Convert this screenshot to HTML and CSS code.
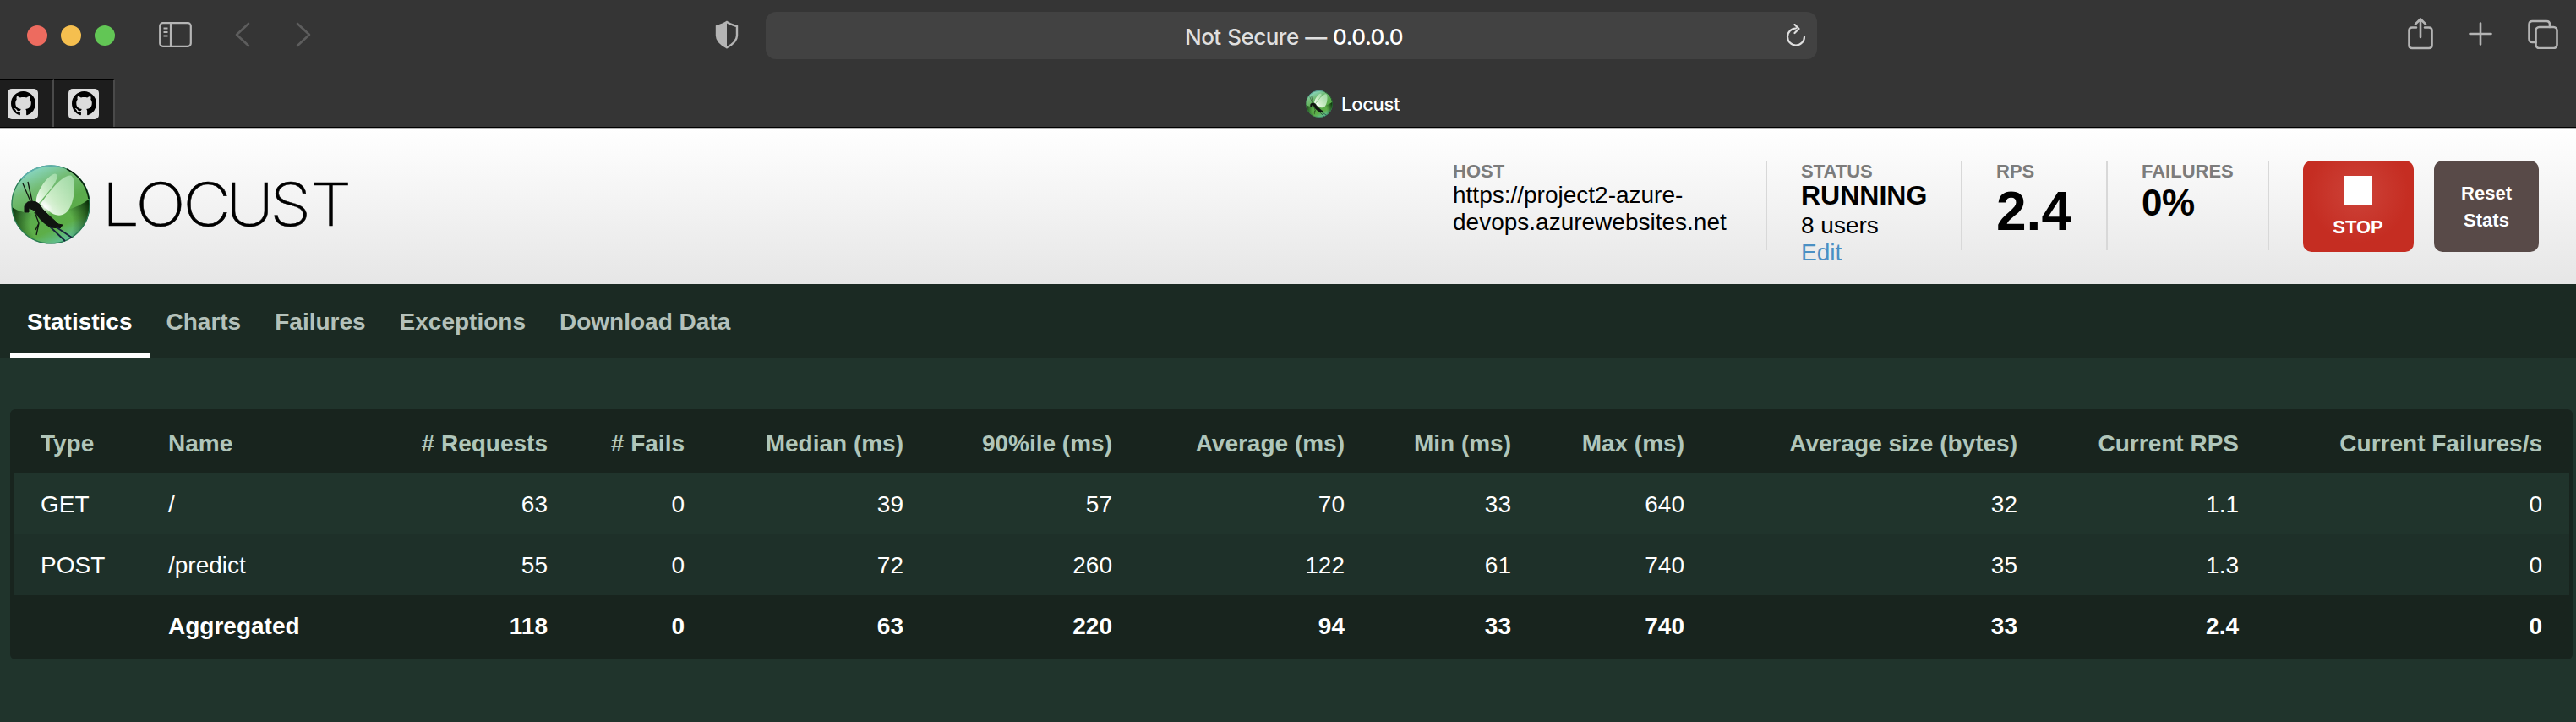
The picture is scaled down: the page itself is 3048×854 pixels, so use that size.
FILE: index.html
```html
<!DOCTYPE html>
<html lang="en">
<head>
<meta charset="utf-8">
<title>Locust</title>
<link rel="stylesheet" href="styles.css">
</head>
<body>
<svg class="defs" width="0" height="0">
  <defs>
    <linearGradient id="ball" x1="0.2" y1="0" x2="0.65" y2="1">
      <stop offset="0" stop-color="#8fdedb"/><stop offset="0.28" stop-color="#74bd76"/><stop offset="0.55" stop-color="#5aab4c"/><stop offset="0.8" stop-color="#5dae48"/><stop offset="1" stop-color="#62c3a0"/>
    </linearGradient>
    <radialGradient id="shade" gradientUnits="userSpaceOnUse" cx="48" cy="70" r="50">
      <stop offset="0.5" stop-color="#0b3a08" stop-opacity="0"/><stop offset="1" stop-color="#062a06" stop-opacity="0.95"/>
    </radialGradient>
    <linearGradient id="wing" x1="0" y1="1" x2="1" y2="0">
      <stop offset="0" stop-color="#fff"/><stop offset="0.4" stop-color="#d7f3d3" stop-opacity="0.9"/><stop offset="1" stop-color="#a9e0b0" stop-opacity="0.8"/>
    </linearGradient>
    <radialGradient id="glow"><stop offset="0" stop-color="#fff"/><stop offset="1" stop-color="#fff" stop-opacity="0"/></radialGradient>
    <symbol id="locust" viewBox="0 0 94 94">
      <circle cx="47" cy="47" r="46.5" fill="url(#ball)"/>
      <path d="M1 50C18 62 65 62 93 40A46.500 46.500 0 0 1 47 93.500A46.500 46.500 0 0 1 1 50Z" fill="url(#shade)"/>
      <circle cx="47" cy="47" r="46" fill="none" stroke="#2a7a55" stroke-width="1.200"/>
      <path d="M12 17A46 46 0 0 1 60 3" fill="none" stroke="#5fb0ad" stroke-width="1.500"/>
      <path d="M66 5A46 46 0 0 1 92 40" fill="none" stroke="#07200c" stroke-width="1.500"/>
      <path d="M30 45C28 34 43 12 52 10.500C58 11 53 22 45 31C39 38 35 43 32 46Z" fill="url(#wing)"/>
      <path d="M35 46C44 33 61 11 71 12.500C77 16 76 38 70 50C65 60 57 62 48 57Z" fill="url(#wing)"/>
      <ellipse cx="40" cy="50" rx="11" ry="7" transform="rotate(40 40 50)" fill="url(#glow)"/>
      <path d="M16 56L16 49Q18 43 24 43Q31 43 34 47C37 54 48 62 56 70L61 71L58 75L47 74C36 68 30 59 28 54L21 51L21 56Z" fill="#101410" stroke="#101410"/>
      <path d="M23 43L14 22M25 43L20 20M28 56L33 69L30 83M33 69L29 77" fill="none" stroke="#101810" stroke-width="1.300"/>
      <path d="M46 73L64 90M54 74L72 86" fill="none" stroke="#16243b" stroke-width="1.800"/>
    </symbol>
    <symbol id="github" viewBox="0 0 16 16">
      <path d="M8 0C3.580 0 0 3.580 0 8c0 3.540 2.290 6.530 5.470 7.590.4.070.55-.17.55-.38 0-.19-.01-.82-.01-1.490-2.010.37-2.530-.49-2.690-.94-.09-.23-.48-.94-.82-1.130-.28-.15-.68-.52-.01-.53.63-.01 1.080.58 1.230.82.72 1.210 1.870.87 2.330.66.07-.52.28-.87.51-1.070-1.780-.2-3.640-.89-3.640-3.950 0-.87.31-1.590.82-2.150-.08-.2-.36-1.020.08-2.120 0 0 .67-.21 2.200.82.64-.18 1.320-.27 2-.27s1.360.09 2 .27c1.530-1.040 2.200-.82 2.200-.82.44 1.100.16 1.920.08 2.120.51.56.82 1.270.82 2.150 0 3.070-1.870 3.750-3.650 3.950.29.25.54.73.54 1.480 0 1.070-.01 1.930-.01 2.200 0 .21.15.46.55.38A8.010 8.010 0 0 0 16 8c0-4.420-3.580-8-8-8z"/>
    </symbol>
  </defs>
</svg>

<div class="browser">
  <div class="toolbar">
    <div class="tools-left">
      <div class="lights"><i class="light red"></i><i class="light yellow"></i><i class="light green"></i></div>
      <svg class="sidebar-icon" width="40" height="30" viewBox="0 0 40 30"><rect x="1.200" y="1.200" width="36.600" height="27.600" rx="3.500"/><path d="M14 1V29M5.500 7.500H10.500M5.500 12H10.500M5.500 16.500H10.500"/></svg>
      <svg class="nav-icon back" width="18" height="30" viewBox="0 0 18 30"><path d="M16 2L2 15L16 28"/></svg>
      <svg class="nav-icon forward" width="18" height="30" viewBox="0 0 18 30"><path d="M2 2L16 15L2 28"/></svg>
    </div>
    <svg class="shield" width="28" height="34" viewBox="0 0 28 34"><path class="edge" d="M14 2C17.500 4.500 21 5.500 26 7.200V18C26 24 21 28.500 14 32.300C7 28.500 2 24 2 18V7.200C7 5.500 10.500 4.500 14 2Z"/><path class="half" d="M14 2V32.300C7 28.500 2 24 2 18V7.200C7 5.500 10.500 4.500 14 2Z"/></svg>
    <div class="address">
      <span class="url">Not Secure — <b>0.0.0.0</b></span>
      <svg class="reload" width="24" height="28" viewBox="0 0 24 28"><path d="M12 5.500A10 10 0 1 0 22 15.500M10.500 1L15.500 6L10.500 11"/></svg>
    </div>
    <div class="tools-right">
      <svg width="30" height="40" viewBox="0 0 30 40"><path d="M10 12.500H5Q1.500 12.500 1.500 16V33.500Q1.500 37 5 37H25Q28.500 37 28.500 33.500V16Q28.500 12.500 25 12.500H20M15 24V2.500M9 8.500L15 2.500L21 8.500"/></svg>
      <svg width="28" height="28" viewBox="0 0 28 28"><path d="M14 1.500V26.500M1.500 14H26.500"/></svg>
      <svg width="36" height="36" viewBox="0 0 36 36"><rect x="9.500" y="10" width="25" height="25" rx="4"/><path d="M9.500 28H5.500Q1.500 28 1.500 24V7Q1.500 3 5.500 3H22Q26 3 26 7V10"/></svg>
    </div>
  </div>
  <div class="tabs">
    <div class="pin first"><span><svg width="29" height="29"><use href="#github"/></svg></span></div>
    <div class="pin"><span><svg width="29" height="29"><use href="#github"/></svg></span></div>
    <div class="active-tab"><svg width="32" height="32"><use href="#locust"/></svg><span>Locust</span></div>
  </div>
</div>

<header class="top">
  <div class="logo">
    <svg width="94" height="94"><use href="#locust"/></svg>
    <svg class="wordmark" width="300" height="90" viewBox="0 0 300 90"><text transform="scale(1.12 1)" y="76" x="-4.700 30.700 80.700 126 172.500 215.200">LOCUST</text></svg>
  </div>
  <div class="boxes">
    <div class="box host"><div class="label">HOST</div><div>https://project2-azure-<br>devops.azurewebsites.net</div></div>
    <div class="box status"><div class="label">STATUS</div><div class="running">RUNNING</div><div>8 users</div><a href="#">Edit</a></div>
    <div class="box rps"><div class="label">RPS</div><div class="big">2.4</div></div>
    <div class="box fail"><div class="label">FAILURES</div><div class="mid">0%</div></div>
    <button class="btn stop"><i></i>STOP</button>
    <button class="btn reset">Reset<br>Stats</button>
  </div>
</header>

<nav class="menu"><a class="on">Statistics</a><a>Charts</a><a>Failures</a><a>Exceptions</a><a>Download Data</a></nav>

<main>
<table class="stats">
  <colgroup><col class="c1"><col class="c2"><col class="c3"><col class="c4"><col class="c5"><col class="c6"><col class="c7"><col class="c8"><col class="c9"><col class="c10"><col class="c11"><col class="c12"></colgroup>
  <thead><tr><th>Type</th><th>Name</th><th># Requests</th><th># Fails</th><th>Median (ms)</th><th>90%ile (ms)</th><th>Average (ms)</th><th>Min (ms)</th><th>Max (ms)</th><th>Average size (bytes)</th><th>Current RPS</th><th>Current Failures/s</th></tr></thead>
  <tbody>
    <tr><td>GET</td><td>/</td><td>63</td><td>0</td><td>39</td><td>57</td><td>70</td><td>33</td><td>640</td><td>32</td><td>1.1</td><td>0</td></tr>
    <tr class="alt"><td>POST</td><td>/predict</td><td>55</td><td>0</td><td>72</td><td>260</td><td>122</td><td>61</td><td>740</td><td>35</td><td>1.3</td><td>0</td></tr>
    <tr class="total"><td></td><td>Aggregated</td><td>118</td><td>0</td><td>63</td><td>220</td><td>94</td><td>33</td><td>740</td><td>33</td><td>2.4</td><td>0</td></tr>
  </tbody>
</table>
</main>
</body>
</html>
```
FILE: styles.css
```css
* { box-sizing: border-box; }
body { margin: 0; height: 854px; overflow: hidden; background: #20342c; font: 28px/32px "Liberation Sans", Arial, sans-serif; color: #000; }
svg { display: block; }
.defs { position: absolute; }

.browser { height: 152px; background: #353535; border-bottom: 1px solid #b5b5b5; box-shadow: inset 0 -1px #000; font-family: Inter, sans-serif; }
.toolbar { height: 94px; display: flex; align-items: flex-start; }
.tools-left { width: 846px; display: flex; padding-left: 32px; }
.lights { display: flex; gap: 16px; padding-top: 30px; }
.light { width: 24px; height: 24px; border-radius: 50%; }
.red { background: #ed6b5f; }
.yellow { background: #f5bf4f; }
.green { background: #62c655; }
.sidebar-icon { margin: 26px 0 0 52px; fill: none; stroke: #b5b5b5; stroke-width: 2.2; }
.nav-icon { margin-top: 26px; fill: none; stroke: #5d5d5d; stroke-width: 2.6; stroke-linecap: round; stroke-linejoin: round; }
.back { margin-left: 50px; }
.forward { margin-left: 54px; }
.shield { margin-top: 24px; }
.shield .edge { fill: none; stroke: #b4b4b4; stroke-width: 2.4; }
.shield .half { fill: #b4b4b4; }
.address { width: 1244px; height: 56px; margin: 14px 0 0 32px; border-radius: 12px; background: #424242; display: flex; align-items: center; padding: 0 13px 0 496px; justify-content: space-between; }
.url { padding-top: 3px; font-size: 26px; font-weight: 450; letter-spacing: -0.5px; word-spacing: 1px; color: #dfdfdf; white-space: nowrap; }
.url b { font-weight: 500; color: #fff; }
.reload { fill: none; stroke: #dedede; stroke-width: 2.2; stroke-linecap: round; stroke-linejoin: round; }
.tools-right { margin-left: 699px; padding-top: 20px; display: flex; align-items: center; gap: 42px; }
.tools-right svg { fill: none; stroke: #b4b4b4; stroke-width: 2.6; stroke-linecap: round; stroke-linejoin: round; flex: none; }

.tabs { height: 57px; display: flex; }
.pin { width: 72px; height: 56px; background: #1d1d1d; border-top: 1px solid #000; border-right: 2px solid #4a4a4a; display: flex; align-items: center; padding-left: 17px; }
.pin.first { width: 64px; padding-left: 9px; }
.pin span { width: 36px; height: 36px; border-radius: 5px; background: #dcdcdc; display: grid; place-items: center; }
.active-tab { flex: 1; display: flex; align-items: center; gap: 10px; padding-left: 1409px; color: #fff; font-size: 22px; font-weight: 500; letter-spacing: -0.3px; }

.top { height: 184px; background: linear-gradient(#fff, #e6e6e6); display: flex; justify-content: space-between; }
.logo { display: flex; padding: 43px 0 0 13px; }
.wordmark { margin: -4px 0 0 19px; overflow: visible; }
.wordmark text { font: 200 70px Inter, sans-serif; fill: #000; stroke: #000; stroke-width: 0.5; }
.boxes { display: flex; padding: 38px 44px 0 0; }
.box { height: 106px; border-right: 2px solid #d8d8d8; margin-right: 40px; white-space: nowrap; }
.label { font-size: 22px; line-height: 26px; font-weight: bold; color: #7c7c7c; height: 25px; }
.host { width: 372px; }
.status { width: 191px; }
.rps { width: 132px; }
.fail { width: 151px; }
.running { font-size: 32px; font-weight: bold; line-height: 32px; height: 36px; }
.box a { color: #4a90c4; text-decoration: none; }
.big { font-size: 64px; line-height: 70px; font-weight: bold; }
.mid { font-size: 44px; line-height: 49px; font-weight: bold; letter-spacing: -0.5px; }
.btn { border: 0; border-radius: 10px; height: 108px; padding: 0; font: bold 22px/32px "Liberation Sans", Arial, sans-serif; color: #fff; }
.stop { width: 131px; margin-right: 24px; background: radial-gradient(circle at 50% 35%, #cd4339, #c52d22 62%); display: flex; flex-direction: column; align-items: center; padding: 18px 1px 0 0; gap: 11px; }
.stop i { width: 34px; height: 34px; background: #fff; }
.reset { width: 124px; background: #584a48; padding-top: 1px; }

.menu { height: 88px; background: #1b2a23; display: flex; padding-left: 12px; font-weight: bold; color: #b4c1ba; }
.menu a { padding: 29px 20px 21px; border-bottom: 6px solid transparent; }
.menu .on { color: #fff; border-color: #fff; }

main { padding: 60px 4px 0 12px; }
.stats { width: 3032px; table-layout: fixed; border-collapse: separate; border-spacing: 0; border: 4px solid #18241e; border-radius: 6px; background: #18241e; color: #fff; }
.stats th, .stats td { height: 72px; padding: 2px 32px 0 0; text-align: right; white-space: nowrap; }
.stats th { color: #b0c6ba; }
.stats th:nth-child(-n+2), .stats td:nth-child(-n+2) { text-align: left; padding: 2px 0 0 32px; }
.stats td { background: #20342c; }
.stats .alt td { background: #1e3029; }
.stats .total td { background: #18241e; font-weight: bold; }
.c1 { width: 151px; } .c2 { width: 299px; } .c3 { width: 214px; } .c4 { width: 162px; }
.c5 { width: 259px; } .c6 { width: 247px; } .c7 { width: 275px; } .c8 { width: 197px; }
.c9 { width: 205px; } .c10 { width: 394px; } .c11 { width: 262px; } .c12 { width: 359px; }
```
